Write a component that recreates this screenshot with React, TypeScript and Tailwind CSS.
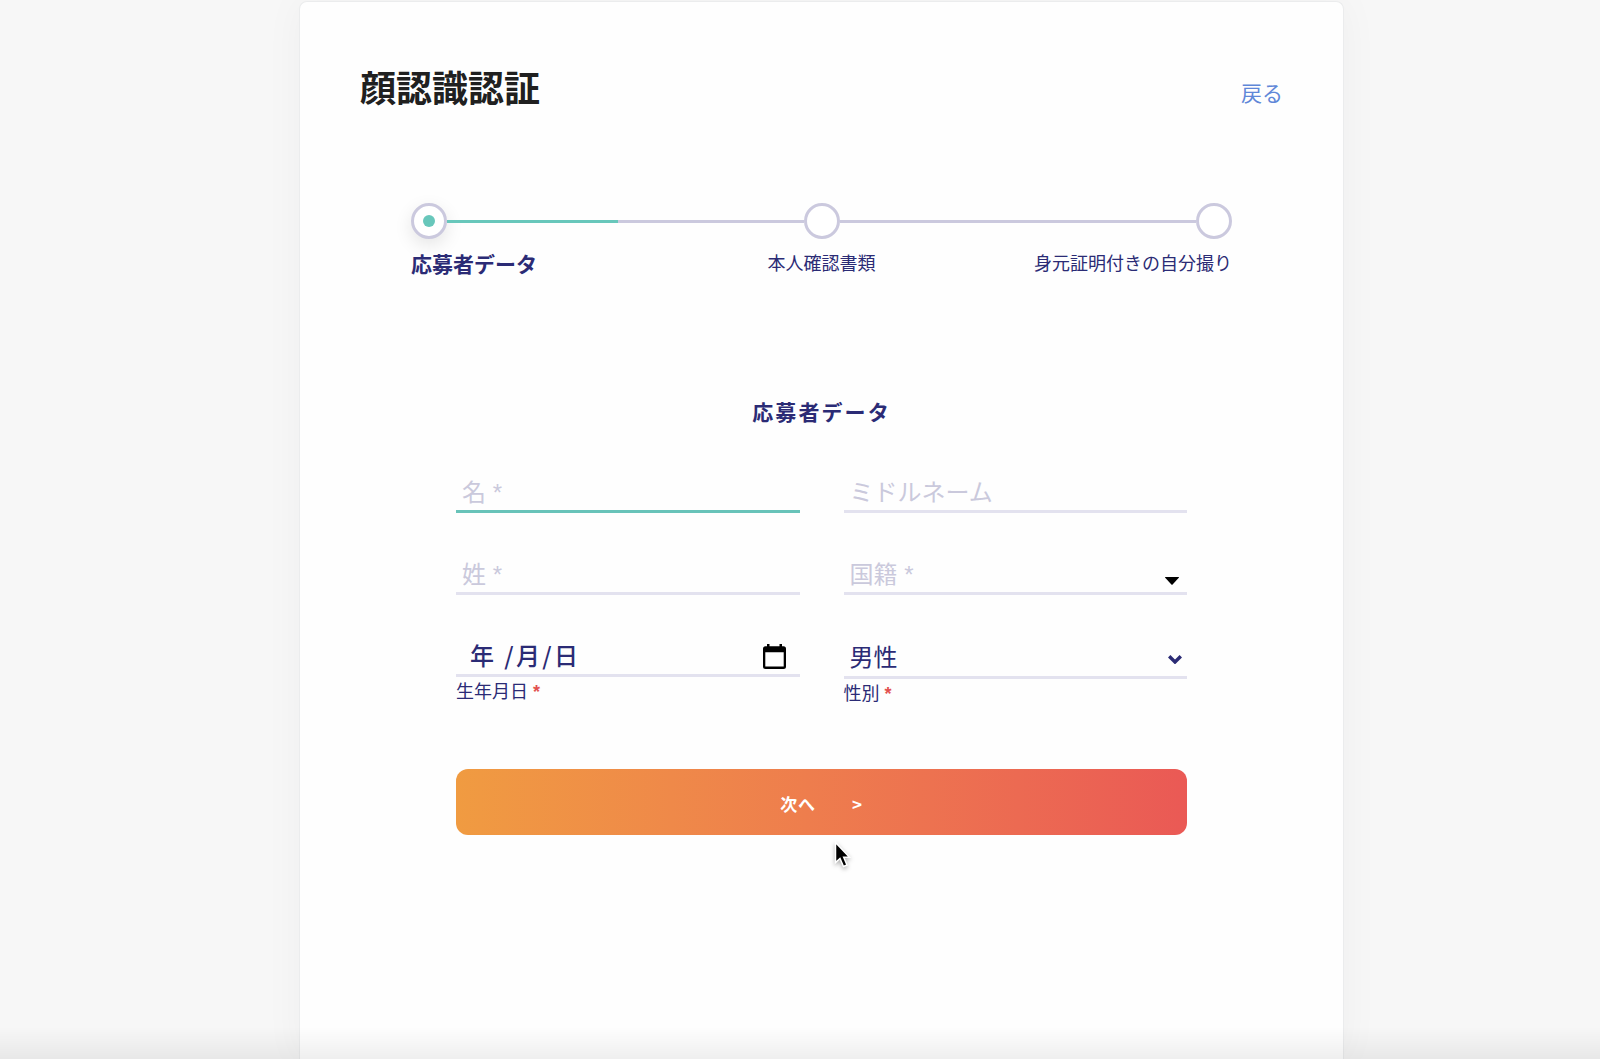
import React, { useState } from "react";

const steps = [
  { label: "応募者データ", align: "text-left" },
  { label: "本人確認書類", align: "text-center" },
  { label: "身元証明付きの自分撮り", align: "text-right" },
];

const field =
  "block w-full appearance-none rounded-none border-b-3 border-[#e3e2ef] bg-transparent text-2xl text-[#2b2b75] outline-none placeholder:text-[#cac9dc] placeholder:opacity-100 focus:border-[#68c3b9]";

const Stepper: React.FC<{ current: number }> = ({ current }) => (
  <nav className="px-[51px]">
    <div className="flex items-center">
      {steps.map((step, index) => (
        <React.Fragment key={step.label}>
          {index > 0 && (
            <div className="h-[3px] flex-1 bg-[#cbc9de]">
              {index === current + 1 && <div className="h-full w-[48%] bg-[#68c7bb]" />}
            </div>
          )}
          <div
            className={`flex size-9 items-center justify-center rounded-full border-3 border-[#cbc9de] bg-white ${
              index === current ? "shadow-[0_6px_18px_rgba(0,0,0,0.1)]" : ""
            }`}>
            {index === current && <span className="size-3 rounded-full bg-[#68c7bb]" />}
          </div>
        </React.Fragment>
      ))}
    </div>
    <ol className="mt-2.5 grid grid-cols-3 whitespace-nowrap text-[#2b2b75]">
      {steps.map((step, index) => (
        <li
          key={step.label}
          className={`${step.align} ${
            index === current ? "text-[21px] leading-8 font-bold" : "text-lg leading-[30px]"
          }`}>
          {step.label}
        </li>
      ))}
    </ol>
  </nav>
);

export const App: React.FC = () => {
  const [country, setCountry] = useState("");

  return (
    <div className="flex min-h-screen flex-col bg-[#f7f7f7] pt-px pr-64 pl-[299px] font-['Liberation_Sans','Noto_Sans_CJK_JP',sans-serif]">
      <main className="flex-1 rounded-t-lg border border-b-0 border-[#ebeced] bg-[#fefefe] px-[60px] pt-[60px] shadow-[0_0_40px_rgba(0,0,0,0.04)]">
        <header className="flex items-center justify-between">
          <h1 className="text-4xl leading-[56px] font-bold text-[#202020]">顔認識認証</h1>
          <a href="#back" className="pt-2 text-[21px] leading-8 text-[#5f87d8]">
            戻る
          </a>
        </header>

        <div className="mt-[85px]">
          <Stepper current={0} />
        </div>

        <form className="mt-[116px] px-24" onSubmit={(e) => e.preventDefault()}>
          <h2 className="text-center text-[21px] leading-8 font-bold tracking-widest text-[#2b2b75]">
            応募者データ
          </h2>

          <div className="mt-[46px] grid grid-cols-2 gap-x-11 gap-y-11">
            <input
              aria-label="名"
              placeholder="名 *"
              className={`${field} h-[38px] px-1.5`}
              autoFocus
            />
            <input
              aria-label="ミドルネーム"
              placeholder="ミドルネーム"
              className={`${field} h-[38px] px-1.5`}
            />
            <input aria-label="姓" placeholder="姓 *" className={`${field} h-[38px] px-1.5`} />
            <div className="relative">
              <select
                aria-label="国籍"
                value={country}
                onChange={(e) => setCountry(e.target.value)}
                className={`${field} h-[38px] px-1.5 ${country ? "" : "text-[#cac9dc]"}`}>
                <option value="">国籍 *</option>
                <option value="jp">日本</option>
              </select>
              <svg
                viewBox="0 0 14 8"
                className="pointer-events-none absolute right-2 bottom-2.5 h-2 w-3.5">
                <path d="M0 .5C0 0 .5 0 1 0H13C13.5 0 14 0 14 .5L7.6 7.6Q7 8 6.4 7.6Z" />
              </svg>
            </div>
            <div>
              <div className="relative">
                <input
                  id="birthday"
                  defaultValue="年 /月/日"
                  className={`${field} h-[38px] px-3.5 pb-1 font-['Noto_Sans_CJK_JP',sans-serif] font-medium tracking-widest`}
                />
                <button
                  type="button"
                  aria-label="カレンダー"
                  className="absolute right-3.5 bottom-2 h-[25px] w-[23px]">
                  <svg viewBox="0 0 23 25" className="size-full">
                    <path
                      fillRule="evenodd"
                      d="M4 0h2.500v2.200h10V0H19v2.200h1.500A2.500 2.500 0 0 1 23 4.700v17.800a2.500 2.500 0 0 1-2.500 2.500h-18A2.500 2.500 0 0 1 0 22.500V4.700a2.500 2.500 0 0 1 2.500-2.500H4ZM2.300 8.200v14.300h18.400V8.200Z"
                    />
                  </svg>
                </button>
              </div>
              <label htmlFor="birthday" className="block text-lg leading-[30px] text-[#2b2b75]">
                生年月日 <span className="font-bold text-[#e2514f]">*</span>
              </label>
            </div>
            <div>
              <div className="relative">
                <select
                  id="gender"
                  defaultValue="male"
                  className={`${field} h-10 px-1.5`}>
                  <option value="male">男性</option>
                  <option value="female">女性</option>
                </select>
                <svg
                  viewBox="0 0 14 9"
                  fill="none"
                  stroke="#2b2b75"
                  strokeWidth="3.4"
                  className="pointer-events-none absolute right-[5px] bottom-[15px] h-[9px] w-3.5">
                  <path d="M1.200 1.200 7 7 12.800 1.200" />
                </svg>
              </div>
              <label htmlFor="gender" className="block text-lg leading-[30px] text-[#2b2b75]">
                性別 <span className="font-bold text-[#e2514f]">*</span>
              </label>
            </div>
          </div>

          <button
            type="submit"
            className="relative mt-[60px] flex h-[66px] w-full items-center justify-center gap-9 rounded-xl bg-linear-to-r from-[#f09b41] to-[#ea5955] pt-1 font-['Noto_Sans_CJK_JP',sans-serif] text-[17px] font-bold tracking-wider text-white">
            <span>次へ</span>
            <span>&gt;</span>
            <svg
              viewBox="0 0 18 28"
              className="absolute top-full left-1/2 mt-1.5 ml-3 h-7 w-[18px] drop-shadow-[0_2px_2px_rgba(0,0,0,0.3)]">
              <path
                d="M1.500 1.500V21.500L6 17.500 9.500 25.500 13 24 9.700 16.300H15.500Z"
                fill="#000"
                stroke="#fff"
                strokeWidth="1.500"
              />
            </svg>
          </button>
        </form>
      </main>
      <div className="pointer-events-none fixed inset-x-0 bottom-0 h-8 bg-linear-to-b from-transparent to-black/6" />
    </div>
  );
};

export default App;
